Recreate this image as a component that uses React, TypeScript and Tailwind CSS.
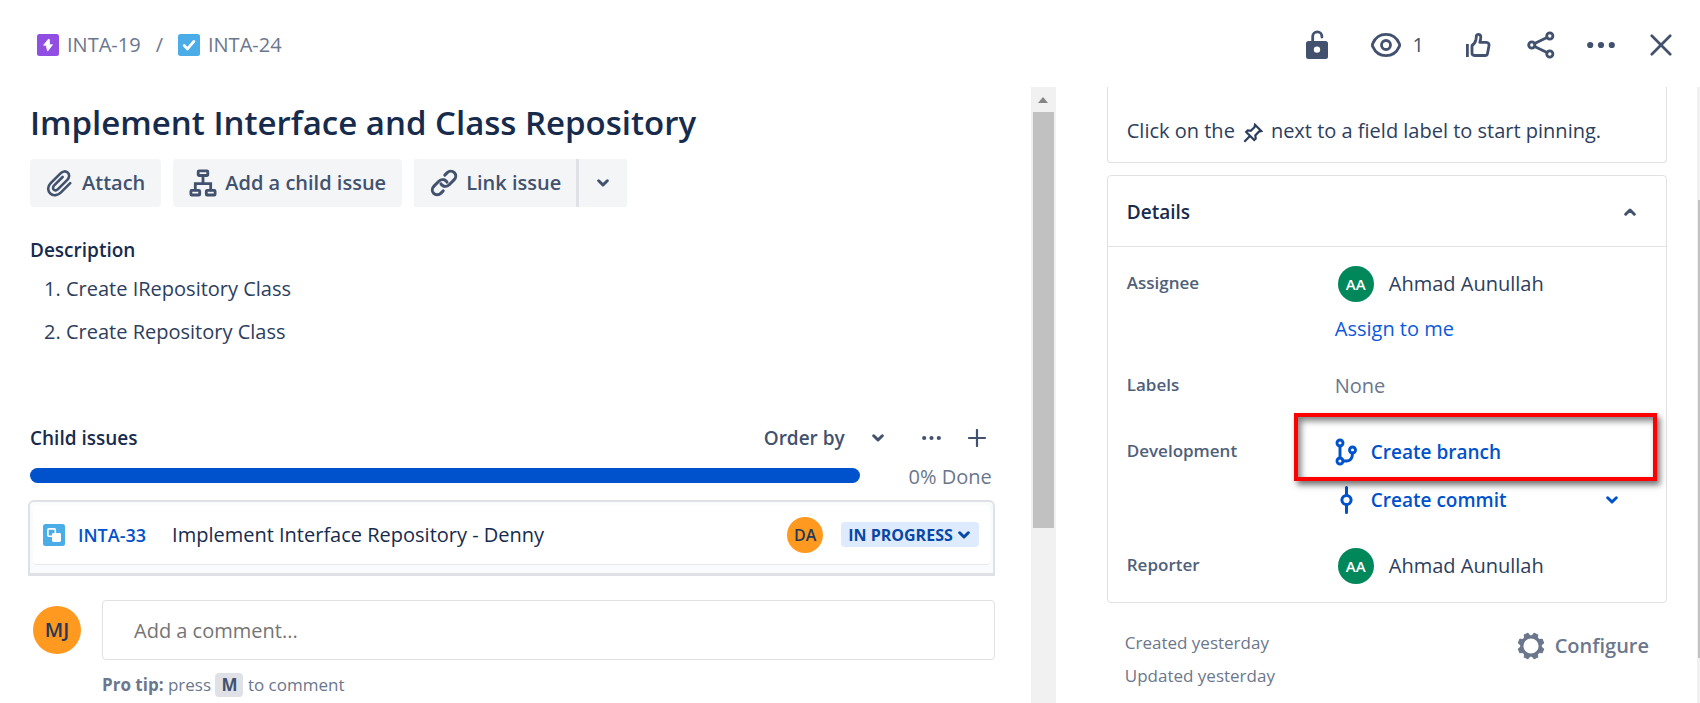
import React from "react";

type IconProps = { className?: string };

const stroke = {
  fill: "none",
  stroke: "currentColor",
  strokeWidth: 3,
  strokeLinecap: "round" as const,
  strokeLinejoin: "round" as const,
  "aria-hidden": true,
};

function Chevron({ className = "", up = false }: IconProps & { up?: boolean }) {
  return (
    <svg viewBox="0 0 12 8" className={`h-2 w-3 shrink-0 ${className}`} {...stroke}>
      <path d={up ? "M1.7 6.2 6 2l4.3 4.2" : "M1.7 1.8 6 6l4.3-4.2"} />
    </svg>
  );
}

function EpicIcon() {
  return (
    <svg viewBox="0 0 22 22" className="size-[22px] shrink-0" aria-hidden="true">
      <rect width="22" height="22" rx="2.5" fill="#904EE2" />
      <path d="M11.3 5.3 6.6 11.2h3.6l-.9.9 1.4 5 4.8-6.4h-3.1V5.6z" fill="#fff" stroke="#fff" strokeWidth=".8" strokeLinejoin="round" />
    </svg>
  );
}

function TaskIcon() {
  return (
    <svg viewBox="0 0 22 22" className="size-[22px] shrink-0" aria-hidden="true">
      <rect width="22" height="22" rx="2.5" fill="#4BADE8" />
      <path d="m6.2 11.6 3.3 3.3 6.4-7.5" fill="none" stroke="#fff" strokeWidth="2.8" strokeLinecap="round" strokeLinejoin="round" />
    </svg>
  );
}

function SubtaskIcon() {
  return (
    <svg viewBox="0 0 22 22" className="size-[22px] shrink-0" aria-hidden="true">
      <rect width="22" height="22" rx="2.5" fill="#4BADE8" />
      <rect x="4.9" y="4.9" width="7.4" height="7.4" rx="1" fill="none" stroke="#fff" strokeWidth="1.6" />
      <rect x="9" y="9" width="9" height="9" rx="1.4" fill="#fff" />
    </svg>
  );
}

function PaperclipIcon() {
  return (
    <svg viewBox="0 0 26 28" className="h-7 w-[26px] shrink-0" {...stroke} strokeWidth={2.6}>
      <path d="M24.2 14.2 15 23.3c-3 3-7.6 4.2-10.7 1.2-3.200-3.100-2.500-7.500.4-10.400L14.500 4.300c2.100-2.100 5.300-2.700 7.300-.6 2 2 1.600 5-.5 7.100l-9.300 9.300c-1.200 1.200-3 1.600-4.200.5-1.200-1.200-.8-3 .4-4.200l8.400-8.400" />
    </svg>
  );
}

function TreeIcon() {
  return (
    <svg viewBox="0 0 28 28" className="size-7 shrink-0" {...stroke} strokeWidth={2.8}>
      <rect x="9.2" y="1.9" width="9.6" height="4.6" rx=".8" />
      <rect x="1.9" y="21.4" width="8.8" height="4.6" rx=".8" />
      <rect x="17.3" y="21.4" width="8.8" height="4.6" rx=".8" />
      <path d="M14 7v7M6.3 21v-6.300h15.400V21" strokeLinejoin="miter" />
    </svg>
  );
}

function LinkIcon() {
  return (
    <svg viewBox="0 0 28 28" className="size-7 shrink-0" {...stroke}>
      <path d="M14.8 6.1 17 3.900c2.200-2.200 5.400-2.200 7.300-.3s1.900 5.100-.3 7.300l-4.800 4.800c-2.200 2.200-5.500 2.200-7.400.2-.3-.3-.6-.7-.8-1.100" />
      <path d="m13.200 21.900-2.200 2.200c-2.200 2.200-5.400 2.200-7.300.3s-1.900-5.100.3-7.300l4.800-4.800c2.200-2.200 5.500-2.200 7.400-.2.300.3.600.7.800 1.100" />
    </svg>
  );
}

function UnlockIcon() {
  return (
    <svg viewBox="0 0 22 30" className="h-[30px] w-[22px] shrink-0" aria-hidden="true">
      <path d="M6.700 12V6.400a4.600 4.600 0 0 1 9.200 0V7" fill="none" stroke="currentColor" strokeWidth="2.8" strokeLinecap="round" />
      <path fillRule="evenodd" fill="currentColor" d="M2.500 11h17A2.500 2.500 0 0 1 22 13.500v13a2.500 2.500 0 0 1-2.500 2.500h-17A2.500 2.500 0 0 1 0 26.500v-13A2.500 2.500 0 0 1 2.500 11zM11 16.400a3.200 3.200 0 1 0 0 6.400 3.200 3.200 0 0 0 0-6.400z" />
    </svg>
  );
}

function EyeIcon() {
  return (
    <svg viewBox="0 0 30 24" className="h-6 w-[30px] shrink-0" {...stroke} strokeWidth={2.8}>
      <path d="M15 1.400c6.500 0 11 4 13.200 9a3.500 3.500 0 0 1 0 3.200c-2.200 5-6.700 9-13.200 9s-11-4-13.200-9a3.500 3.500 0 0 1 0-3.200c2.200-5 6.700-9 13.200-9z" />
      <circle cx="15" cy="12" r="4.500" />
    </svg>
  );
}

function ThumbIcon() {
  return (
    <svg viewBox="0 0 26 26" className="size-[26px] shrink-0" {...stroke} strokeWidth={2.8}>
      <path d="M2.400 12V25" strokeLinecap="butt" />
      <path d="M7 13.500c2.200-1.600 3.600-3.700 4-6.300l.4-3.200c.2-2.400 4.400-2.200 4.400 1.300 0 2-.6 3.700-1 5h6.700a2.600 2.600 0 0 1 2.500 3.200l-1.500 7.900a2.600 2.600 0 0 1-2.500 2.100H9.400A2.400 2.400 0 0 1 7 21.100z" />
    </svg>
  );
}

function ShareIcon() {
  return (
    <svg viewBox="0 0 28 28" className="size-7 shrink-0" {...stroke} strokeWidth={2.8}>
      <circle cx="4.8" cy="14" r="3.100" />
      <circle cx="22.800" cy="5" r="3.100" />
      <circle cx="22.800" cy="23" r="3.100" />
      <path d="m7.600 12.600 12.400-6.200M7.600 15.400 20 21.600" />
    </svg>
  );
}

function DotsIcon({ className = "h-2 w-7" }: IconProps) {
  return (
    <svg viewBox="0 0 28 8" className={`shrink-0 ${className}`} fill="currentColor" aria-hidden="true">
      <circle cx="3.200" cy="4" r="3.100" />
      <circle cx="14" cy="4" r="3.100" />
      <circle cx="24.800" cy="4" r="3.100" />
    </svg>
  );
}

function PinIcon() {
  return (
    <svg viewBox="0 0 20 20" className="mx-2 inline-block size-5 shrink-0" {...stroke} strokeWidth={2.200} strokeLinejoin="miter" strokeLinecap="butt">
      <path d="M12 1.800 18.200 8l-2.200.6-3.700 3.900.4 3-1.500 1.500-8-8L4.700 7.500l3 .4 3.800-3.700zM7.200 12.800 1.300 18.700" />
    </svg>
  );
}

function BranchIcon() {
  return (
    <svg viewBox="0 0 22 28" className="h-7 w-[22px] shrink-0" {...stroke} strokeWidth={2.9}>
      <circle cx="5" cy="5" r="3" />
      <circle cx="5" cy="23" r="3" />
      <circle cx="17.500" cy="12" r="3" />
      <path d="M5 8v12M8 23h3.500c3.500 0 6-2.500 6-8" />
    </svg>
  );
}

function CommitIcon() {
  return (
    <svg viewBox="0 0 22 28" className="h-7 w-[22px] shrink-0" {...stroke} strokeWidth={3}>
      <circle cx="11.500" cy="14" r="4.600" />
      <path d="M11.500 1.500v7.500M11.500 19v7.500" />
    </svg>
  );
}

function GearIcon() {
  return (
    <svg viewBox="0 0 28 28" className="size-7 shrink-0" aria-hidden="true">
      <circle cx="14" cy="14" r="9.200" fill="none" stroke="currentColor" strokeWidth="3.200" />
      {[22.5, 67.5, 112.5, 157.5, 202.5, 247.5, 292.5, 337.5].map((angle) => (
        <path key={angle} d="M10.800 5 12 1.100h4L17.200 5z" fill="currentColor" stroke="currentColor" strokeLinejoin="round" transform={`rotate(${angle} 14 14)`} />
      ))}
    </svg>
  );
}

function Avatar({ initials, className }: { initials: string; className: string }) {
  return (
    <span className={`flex shrink-0 items-center justify-center rounded-full font-semibold ${className}`}>{initials}</span>
  );
}

function Person() {
  return (
    <div className="flex h-9 items-center gap-[15px] pl-[3px]">
      <Avatar initials="AA" className="size-9 bg-[#00875A] text-[15px] text-white" />
      <span>Ahmad Aunullah</span>
    </div>
  );
}

const fieldLabel = "text-[17px] leading-[34px] font-semibold text-[#505F79]";
const actionButton = "flex h-12 items-center bg-[#F4F5F7] font-semibold text-[#42526E]";

export default function App() {
  return (
    <div className="flex h-screen flex-col overflow-hidden bg-white font-['Open_Sans','Noto_Sans',sans-serif] text-[20px] leading-7 text-[#2C3E5D]">
      <header className="flex h-[87px] shrink-0 items-center justify-between pt-[3px] pr-7 pl-[37px] text-[#42526E]">
        <nav aria-label="Breadcrumb" className="flex items-center text-[#6B778C]">
          <a href="#inta-19" className="flex items-center gap-2">
            <EpicIcon />
            INTA-19
          </a>
          <span className="mx-[15px]">/</span>
          <a href="#inta-24" className="flex items-center gap-2">
            <TaskIcon />
            INTA-24
          </a>
        </nav>
        <div className="flex items-center">
          <button aria-label="Unlock" className="mr-[43px]"><UnlockIcon /></button>
          <button aria-label="Watchers" className="mr-[41px] flex items-center gap-3">
            <EyeIcon />
            <span>1</span>
          </button>
          <button aria-label="Like" className="mr-9"><ThumbIcon /></button>
          <button aria-label="Share" className="mr-8"><ShareIcon /></button>
          <button aria-label="More actions" className="mr-[35px]"><DotsIcon /></button>
          <button aria-label="Close">
            <svg viewBox="0 0 22 22" className="size-[22px]" {...stroke} strokeWidth={2.7}>
              <path d="m1.800 1.800 18.400 18.400M20.200 1.800 1.800 20.200" />
            </svg>
          </button>
        </div>
      </header>

      <div className="grid min-h-0 flex-1 grid-cols-[minmax(0,8fr)_25px_minmax(0,5fr)]">
        <main className="overflow-hidden pt-3 pr-9 pl-[30px]">
          <h1 className="text-[33px] leading-[48px] font-semibold text-[#172B4D]">Implement Interface and Class Repository</h1>

          <div className="mt-3 flex gap-3">
            <button className={`${actionButton} gap-[10px] rounded px-4`}>
              <PaperclipIcon />
              Attach
            </button>
            <button className={`${actionButton} gap-2 rounded px-4`}>
              <TreeIcon />
              Add a child issue
            </button>
            <div className="flex gap-[3px] rounded bg-[#DFE1E6]">
              <button className={`${actionButton} gap-2 rounded-l pr-[15px] pl-4`}>
                <LinkIcon />
                Link issue
              </button>
              <button aria-label="More link options" className={`${actionButton} w-12 justify-center rounded-r`}>
                <Chevron />
              </button>
            </div>
          </div>

          <h2 className="mt-[29px] text-[19px] font-semibold text-[#172B4D]">Description</h2>
          <ol className="mt-[11px] flex list-decimal flex-col gap-[15px] pl-9">
            <li>Create IRepository Class</li>
            <li>Create Repository Class</li>
          </ol>

          <div className="mt-[72px] flex h-10 items-center text-[#42526E]">
            <h2 className="flex-1 text-[19px] font-semibold text-[#172B4D]">Child issues</h2>
            <button className="mr-[38px] flex items-center gap-[27px] text-[19px] font-semibold">
              Order by
              <Chevron />
            </button>
            <button aria-label="More child issue actions" className="mr-[27px]"><DotsIcon className="h-[6px] w-[19px]" /></button>
            <button aria-label="Add child issue" className="mr-[9px]">
              <svg viewBox="0 0 18 18" className="size-[18px]" {...stroke} strokeWidth={2.2}>
                <path d="M9 1v16M1 9h16" />
              </svg>
            </button>
          </div>

          <div className="mt-[5px] flex items-start">
            <div role="progressbar" aria-label="Child issues done" aria-valuenow={0} className="mt-[5px] h-[15px] flex-1 rounded-full bg-[#0052CC]" />
            <span className="w-[135px] pr-[3px] text-right text-[#6B778C]">0% Done</span>
          </div>

          <div className="mt-[9px] -ml-[2px] rounded-t-md border-2 border-b-3 border-[#DFE1E6] bg-[#FAFBFC] px-[3px] pt-[3px] pb-2">
            <div className="flex h-[60px] items-center rounded border-b border-[#E7E9ED] bg-white pr-[11px] pl-[10px]">
              <SubtaskIcon />
              <a href="#inta-33" className="ml-[13px] text-[18px] font-semibold text-[#0052CC]">INTA-33</a>
              <span className="ml-[26px] flex-1 text-[#172B4D]">Implement Interface Repository - Denny</span>
              <Avatar initials="DA" className="size-9 bg-[#FF991F] text-[16px] text-[#253858]" />
              <button className="ml-[18px] flex h-[25px] items-center gap-[5px] rounded bg-[#DEEBFF] pr-[9px] pl-[7px] text-[16px] font-bold text-[#0747A6]">
                IN PROGRESS
                <Chevron />
              </button>
            </div>
          </div>

          <div className="mt-6 flex">
            <Avatar initials="MJ" className="mt-[6px] ml-[3px] size-12 bg-[#FF991F] text-[20px] text-[#253858]" />
            <div className="ml-[21px] flex-1">
              <input
                aria-label="Add a comment"
                placeholder="Add a comment..."
                className="block h-[60px] w-full rounded border border-[#DFE1E6] px-[31px] placeholder:text-[#757575]"
              />
              <p className="mt-[11px] text-[17px] text-[#6B778C]">
                <b>Pro tip:</b> press{" "}
                <kbd className="inline-block h-6 rounded bg-[#DFE1E6] px-[6px] font-[inherit] leading-6 font-bold text-[#42526E]">M</kbd> to comment
              </p>
            </div>
          </div>
        </main>

        <div aria-hidden="true" className="flex flex-col items-center bg-[#F1F1F1]">
          <svg viewBox="0 0 10 6" className="mt-[10px] mb-[9px] h-[6px] w-[10px]" fill="#858585">
            <path d="M0 6 5 0l5 6z" />
          </svg>
          <div className="h-[416px] w-[21px] bg-[#C1C1C1]" />
        </div>

        <div className="flex min-w-0 overflow-hidden">
          <aside className="min-w-0 flex-1 pr-[30px] pl-[51px]">
            <p className="h-[76px] rounded-b border border-t-0 border-[#DFE1E6] pt-[30px] pl-[19px] whitespace-nowrap">
              Click on the
              <PinIcon />
              next to a field label to start pinning.
            </p>

            <section className="mt-3 rounded border border-[#DFE1E6]">
              <div className="flex h-[71px] items-center justify-between border-b border-[#DFE1E6] pt-px pr-[30px] pl-[19px]">
                <h2 className="text-[19px] font-semibold text-[#172B4D]">Details</h2>
                <button aria-label="Collapse details"><Chevron up className="text-[#42526E]" /></button>
              </div>
              <dl className="grid grid-cols-[208px_minmax(0,1fr)] gap-y-[30px] pt-[19px] pb-[18px] pl-[19px]">
                <dt className={fieldLabel}>Assignee</dt>
                <dd>
                  <Person />
                  <a href="#assign" className="mt-[13px] -mb-[5px] block text-[#0C5ADB]">Assign to me</a>
                </dd>
                <dt className={fieldLabel}>Labels</dt>
                <dd className="leading-9 text-[#6B778C]">None</dd>
                <dt className={fieldLabel}>Development</dt>
                <dd className="text-[19px] font-semibold text-[#0052CC]">
                  <div className="relative flex h-9 items-center">
                    <button className="flex items-center gap-[14px]">
                      <BranchIcon />
                      Create branch
                    </button>
                    <span aria-hidden="true" className="pointer-events-none absolute -top-[21px] right-[9px] -bottom-[11px] -left-[41px] border-4 border-[#FE0000] shadow-[3px_4px_6px_rgba(0,0,0,0.55),inset_3px_4px_6px_rgba(0,0,0,0.5)]" />
                  </div>
                  <div className="mt-3 flex h-9 items-center justify-between pr-12">
                    <button className="flex items-center gap-[14px]">
                      <CommitIcon />
                      Create commit
                    </button>
                    <button aria-label="More commit options"><Chevron /></button>
                  </div>
                </dd>
                <dt className={fieldLabel}>Reporter</dt>
                <dd><Person /></dd>
              </dl>
            </section>

            <div className="mt-[23px] flex items-start justify-between pr-[18px] pl-[18px] text-[#6B778C]">
              <div className="text-[17px] leading-[33px]">
                <p>Created yesterday</p>
                <p>Updated yesterday</p>
              </div>
              <button className="mt-[6px] flex items-center gap-[10px] font-semibold">
                <GearIcon />
                Configure
              </button>
            </div>
          </aside>
          <div aria-hidden="true" className="w-[3px] bg-[#F1F1F1] pt-[113px]">
            <div className="ml-px h-[458px] bg-[#C1C1C1]" />
          </div>
        </div>
      </div>
    </div>
  );
}
